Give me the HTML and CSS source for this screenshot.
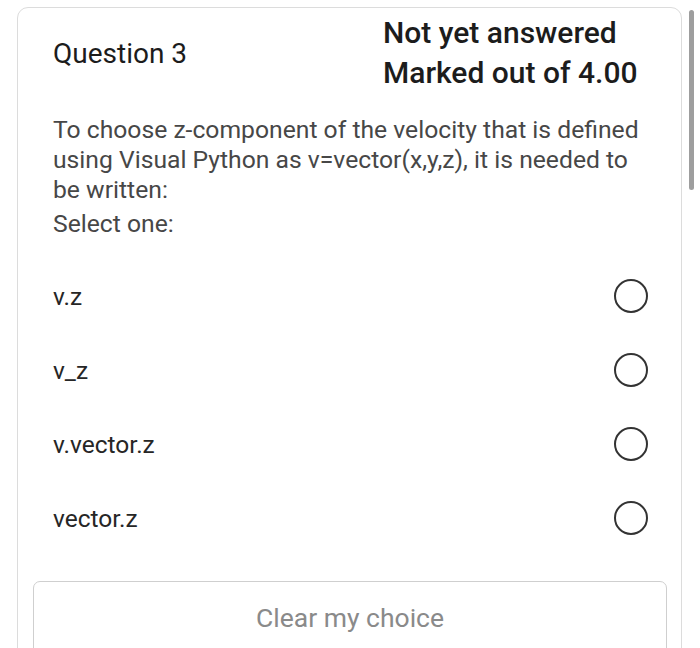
FILE: index.html
```html
<!DOCTYPE html>
<html lang="en">
<head>
<meta charset="utf-8">
<title>Question 3</title>
<link rel="stylesheet" href="styles.css">
</head>
<body>
<div class="que">
    <div class="que_head">
        <h3 class="que_no">Question 3</h3>
        <div class="que_state">
            <div>Not yet answered</div>
            <div>Marked out of 4.00</div>
        </div>
    </div>
    <div class="que_text">
        <p>To choose z-component of the velocity that is defined using Visual Python as v=vector(x,y,z), it is needed to be written:</p>
        <p class="prompt">Select one:</p>
    </div>
    <ul class="answer">
        <li><span>v.z</span><i class="radio"></i></li>
        <li><span>v_z</span><i class="radio"></i></li>
        <li><span>v.vector.z</span><i class="radio"></i></li>
        <li><span>vector.z</span><i class="radio"></i></li>
    </ul>
    <div class="clear_btn">Clear my choice</div>
</div>
<div class="scrollbar"></div>
</body>
</html>
```

FILE: styles.css
```css
html,body,ul,li,h3,p{ margin:0; padding:0; list-style:none;}
body{ background:#fff; font-family:Roboto,"Liberation Sans",sans-serif; color:#222; height:648px; overflow:hidden; position:relative;}
.que{ margin:7px 18px 0 17px; height:720px; border:1px solid #dcdcdc; border-radius:11px; padding:5px 30px 0 35px;}
.que_head{ display:flex; justify-content:space-between; align-items:center;}
.que_no{ font-size:28px; font-weight:400; color:#1c1c1c;}
.que_state{ width:268px; font-size:30px; font-weight:500; line-height:40px; color:#1c1c1c; white-space:nowrap;}
.que_text{ margin-top:22px; font-size:24.7px; line-height:30px; color:#474747;}
.que_text .prompt{ margin-top:4px;}
.answer{ margin-top:20px;}
.answer li{ display:flex; justify-content:space-between; align-items:center; height:74px; font-size:24.5px; color:#262626;}
.radio{ width:30px; height:30px; border:2px solid #333; border-radius:50%; margin-right:3px;}
.clear_btn{ margin:26px -16px 0 -20px; height:100px; border:1px solid #cfcfcf; border-radius:7px; text-align:center; padding-top:20px; font-size:26.5px; color:#8a8a8a; box-sizing:border-box;}
.scrollbar{ position:absolute; left:689px; top:10px; width:5px; height:180px; border-radius:3px; background:#9e9e9e;}
```
